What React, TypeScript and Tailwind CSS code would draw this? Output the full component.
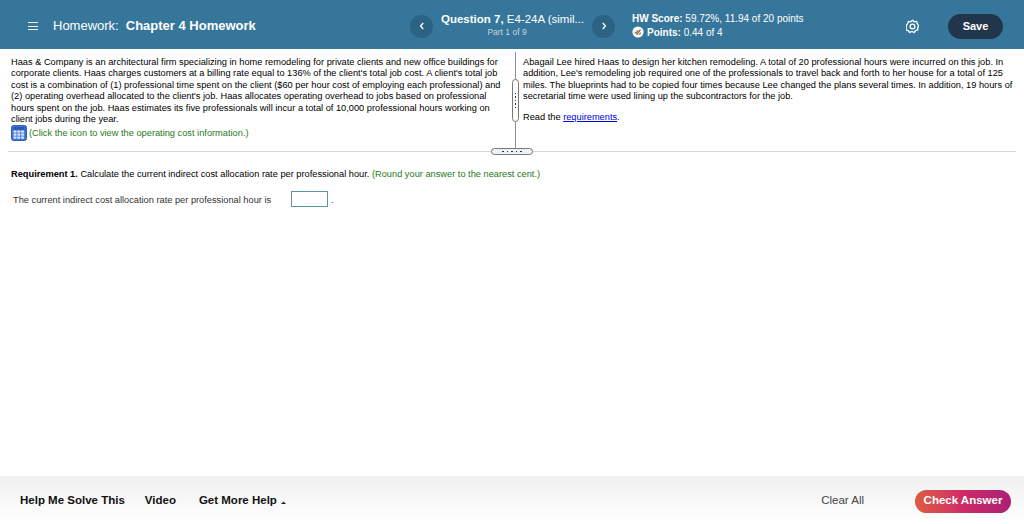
import React from "react";

const Cal = () => (
  <svg width="16" height="16" viewBox="0 0 16 16" className="shrink-0">
    <rect x="0.5" y="0.5" width="15" height="15" rx="2" fill="#3f74d6" stroke="#2f5fc0" />
    <rect x="2.5" y="2" width="11" height="2.5" fill="#2a55b0" />
    {[5.5, 8.5, 11.5].map((y) =>
      [2.5, 6.3, 10.1].map((x) => <rect key={`${x}-${y}`} x={x} y={y} width="3" height="2.2" fill="#dbe6fa" />)
    )}
  </svg>
);

const Gear = () => (
  <svg width="13" height="15" viewBox="0 0 22 24" fill="none" stroke="white" strokeWidth="2.2" strokeLinejoin="round">
    <path d="M11 1.5l3 2.6 4-.6 1.2 3.8 2.3 3.2-1.8 3.5.4 3.9-3.9 1.2-2.6 3-3.6-1.6-3.6 1.6-2.6-3-3.9-1.2.4-3.9L.5 10.5l2.300-3.200L4 3.500l4 .6z" />
    <circle cx="11" cy="12" r="4" />
  </svg>
);

const Points = () => (
  <svg width="12" height="12" viewBox="0 0 12 12" className="shrink-0">
    <circle cx="6" cy="6" r="5.6" fill="white" />
    <path d="M2.800 5.800l1.200 1.200 2-2.600" fill="none" stroke="#3a9a4a" strokeWidth="1.2" />
    <path d="M4.600 9l3.800-5.400" fill="none" stroke="#d0402f" strokeWidth="1.300" />
    <path d="M7 8.600l2-2" fill="none" stroke="#3a9a4a" strokeWidth="1.100" />
  </svg>
);

const Round = ({ ch }: { ch: string }) => (
  <div className="flex h-[23px] w-[23px] shrink-0 items-center justify-center rounded-full bg-[#2c6282]">
    <svg width="6" height="8" viewBox="0 0 6 8" fill="none" stroke="white" strokeWidth="1.3">
      <path d={ch === "l" ? "M4.200 1L1.600 4l2.600 3" : "M1.800 1l2.600 3-2.600 3"} />
    </svg>
  </div>
);

export default function App() {
  return (
    <div className="relative flex h-[524px] w-[1024px] flex-col overflow-hidden bg-white font-['Liberation_Sans',Arial,sans-serif] text-black">
      <header className="flex h-[49px] shrink-0 items-center bg-[#36769a] pt-[3px] text-white">
        <div className="ml-[28px] flex w-[10px] shrink-0 flex-col gap-[2.5px]">
          <span className="h-[1px] bg-white/90" />
          <span className="h-[1px] bg-white/90" />
          <span className="h-[1px] bg-white/90" />
        </div>
        <div className="ml-[15px] w-[357px] shrink-0 text-[13px]">
          Homework:<span className="ml-[7px] font-bold">Chapter 4 Homework</span>
        </div>
        <Round ch="l" />
        <div className="ml-[8px] w-[151px] shrink-0 -translate-y-[1px]">
          <div className="w-[142px] whitespace-nowrap text-[11.5px] leading-[14px]">
            <span className="font-bold">Question 7,</span> E4-24A (simil...
          </div>
          <div className="w-[132px] text-center text-[8.5px] leading-[12px] text-white/70">Part 1 of 9</div>
        </div>
        <Round ch="r" />
        <div className="ml-[17px] w-[274px] shrink-0 -translate-y-[1px] text-[10px]">
          <div className="leading-[13px]">
            <span className="font-bold">HW Score:</span> 59.72%, 11.94 of 20 points
          </div>
          <div className="mt-[1px] flex items-center gap-[3px] leading-[13px]">
            <Points />
            <span>
              <span className="font-bold">Points:</span> 0.44 of 4
            </span>
          </div>
        </div>
        <Gear />
        <button className="ml-[29px] flex h-[25px] w-[55px] items-center justify-center rounded-full bg-[#21364d] text-[11px] font-bold text-white">
          Save
        </button>
      </header>

      <div className="flex h-[102px] shrink-0 pt-[8px] text-[9.25px] leading-[11.4px]">
        <div className="ml-[11px] w-[497px] shrink-0">
          <p className="w-[495px] whitespace-pre-line">
            {"Haas & Company is an architectural firm specializing in home remodeling for private clients and new office buildings for\ncorporate clients. Haas charges customers at a billing rate equal to 136% of the client's total job cost. A client's total job\ncost is a combination of (1) professional time spent on the client ($60 per hour cost of employing each professional) and\n(2) operating overhead allocated to the client's job. Haas allocates operating overhead to jobs based on professional\nhours spent on the job. Haas estimates its five professionals will incur a total of 10,000 professional hours working on\nclient jobs during the year."}
          </p>
          <div className="flex items-center gap-[2px] text-[#267a18]">
            <Cal />
            <span>(Click the icon to view the operating cost information.)</span>
          </div>
        </div>
        <div className="ml-[15px] flex-1">
          <p className="whitespace-pre-line">
            {"Abagail Lee hired Haas to design her kitchen remodeling. A total of 20 professional hours were incurred on this job. In\naddition, Lee's remodeling job required one of the professionals to travel back and forth to her house for a total of 125\nmiles. The blueprints had to be copied four times because Lee changed the plans several times. In addition, 19 hours of\nsecretarial time were used lining up the subcontractors for the job."}
          </p>
          <p className="mt-[9px]">
            Read the <a className="text-[#0000e6] underline">requirements</a>.
          </p>
        </div>
      </div>

      <div className="mx-[8px] h-px shrink-0 bg-[#d8d8d8]" />

      <div className="ml-[11px] mt-[17px] text-[9.25px] leading-[11px]">
        <span className="font-bold">Requirement 1.</span> Calculate the current indirect cost allocation rate per professional hour.{" "}
        <span className="text-[#267a18]">(Round your answer to the nearest cent.)</span>
      </div>
      <div className="ml-[13px] mt-[10px] flex items-center text-[9.25px] leading-[16px] text-[#333]">
        <span className="w-[278px] pt-[2px]">The current indirect cost allocation rate per professional hour is</span>
        <span className="h-[16px] w-[37px] border border-[#5b93ad] bg-white" />
        <span className="ml-[3px] pt-[2px]">.</span>
      </div>

      <footer className="mt-auto flex h-[48px] shrink-0 items-center bg-gradient-to-b from-[#f0f0f0] to-white pt-[2px]">
        <span className="ml-[20px] text-[11.5px] font-bold text-[#111]">Help Me Solve This</span>
        <span className="ml-[20px] text-[11.5px] font-bold text-[#111]">Video</span>
        <span className="ml-[23px] text-[11.5px] font-bold text-[#111]">Get More Help</span>
        <svg width="5" height="3" viewBox="0 0 5 3" className="ml-[4px] mt-[2px]">
          <path d="M0 3L2.500 0.500L5 3z" fill="#222" />
        </svg>
        <span className="ml-auto text-[11.5px] text-[#444]">Clear All</span>
        <button className="ml-[51px] mr-[13px] flex h-[23px] w-[96px] items-center justify-center rounded-full bg-gradient-to-r from-[#dd5c3f] via-[#cf2a66] to-[#ab1f73] text-[11.5px] font-bold text-white">
          Check Answer
        </button>
      </footer>

      {/* Pane dividers */}
      <div className="absolute left-[515px] top-[52px] h-[98px] w-px bg-[#8a949c]" />
      <div className="absolute left-[512px] top-[79px] flex h-[43px] w-[7px] flex-col items-center justify-center gap-[2px] rounded-full border border-[#6f7a85] bg-white">
        {[0, 1, 2, 3, 4].map((i) => (
          <span key={i} className="h-[1.5px] w-[1px] bg-[#333]" />
        ))}
      </div>
      <div className="absolute left-[491px] top-[148px] flex h-[7px] w-[42px] items-center justify-center gap-[3px] rounded-full border border-[#6f7a85] bg-[#eef1f5]">
        {[0, 1, 2, 3, 4].map((i) => (
          <span key={i} className="h-[1px] w-[1.5px] bg-[#333]" />
        ))}
      </div>
    </div>
  );
}
